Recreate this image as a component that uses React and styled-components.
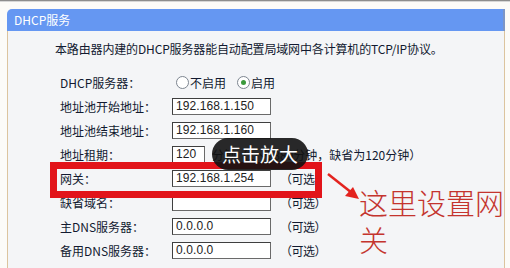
import React from "react";
import styled, { createGlobalStyle } from "styled-components";

const Global = createGlobalStyle`
  html, body { margin: 0; padding: 0; background: #fcfbf8; }
  body { font-family: "Noto Sans CJK SC", "Noto Sans", sans-serif; }
`;

const Page = styled.div`
  position: relative;
  width: 510px;
  height: 268px;
  overflow: hidden;
  background: #fcfbf8;
`;

const TopRule = styled.div`
  height: 1px;
  background: #8d8d8d;
  border-bottom: 1px solid #d6d6d6;
`;

const Panel = styled.section`
  margin: 7px 5px 0 7px;
`;

const Header = styled.div`
  height: 22px;
  background: #6597f2;
  border-radius: 5px 0 0 0;
  border-right: 2px solid #7c95c6;
  color: #fff;
  font-size: 12px;
  line-height: 22px;
  padding-left: 7px;
`;

const Body = styled.div`
  background: #f4f5f7;
  border-left: 1px solid #dcc49e;
  border-right: 1px solid #dcc49e;
  padding: 10px 0 20px 0;
  color: #121a30;
  font-size: 12px;
`;

const Desc = styled.p`
  margin: 0 0 13px 47px;
  line-height: 16px;
  white-space: nowrap;
  letter-spacing: -0.15px;
`;

const Rows = styled.div`
  margin-left: 52px;
  display: flex;
  flex-direction: column;
`;

const Row = styled.div`
  display: flex;
  align-items: center;
  height: 24px;
  white-space: nowrap;
`;

const Label = styled.div`
  width: 112px;
  flex: none;
`;

const Input = styled.div`
  box-sizing: border-box;
  width: ${(p) => p.$w || 99}px;
  height: 17px;
  border: 1px solid #3f3f3f;
  border-right-color: #6a6a6a;
  border-bottom-color: #6a6a6a;
  background: #fff;
  font-family: "Liberation Sans", sans-serif;
  font-size: 12px;
  line-height: 15px;
  padding-left: 3px;
  color: #222;
  letter-spacing: 0.1px;
`;

const Note = styled.span`
  margin-left: ${(p) => p.$gap || 9}px;
  letter-spacing: ${(p) => p.$ls || 0}px;
`;

const RadioGroup = styled.div`
  display: flex;
  align-items: center;
  padding-left: 4px;
`;

const Radio = styled.span`
  box-sizing: border-box;
  width: 13px;
  height: 13px;
  border-radius: 50%;
  border: 1px solid #7d8590;
  background: #fff;
  display: inline-flex;
  align-items: center;
  justify-content: center;
  margin: 0 1px 0 ${(p) => p.$ml || 0}px;
  &::after {
    content: "";
    width: 5px;
    height: 5px;
    border-radius: 50%;
    background: ${(p) => (p.$on ? "#3c9a3c" : "transparent")};
  }
`;

const RedBox = styled.div`
  position: absolute;
  left: 50px;
  top: 162px;
  width: 272px;
  height: 36px;
  box-sizing: border-box;
  border: 7px solid #e2141a;
`;

const Pill = styled.div`
  position: absolute;
  left: 212px;
  top: 138px;
  width: 96px;
  height: 32px;
  border-radius: 16px;
  background: rgba(18, 18, 18, 0.9);
  color: #fff;
  font-size: 19px;
  line-height: 32px;
  text-align: center;
`;

const Callout = styled.div`
  position: absolute;
  left: 359px;
  top: 184px;
  width: 150px;
  font-size: 29px;
  line-height: 37px;
  color: #c4342e;
  font-weight: 300;
`;

const Arrow = styled.svg`
  position: absolute;
  left: 324px;
  top: 170px;
`;

const rows = [
  { label: "地址池开始地址：", value: "192.168.1.150" },
  { label: "地址池结束地址：", value: "192.168.1.160" },
];
const optional = [
  { label: "网关：", value: "192.168.1.254" },
  { label: "缺省域名：", value: "" },
  { label: "主DNS服务器：", value: "0.0.0.0" },
  { label: "备用DNS服务器：", value: "0.0.0.0" },
];

export default function App() {
  return (
    <Page>
      <Global />
      <TopRule />
      <Panel>
        <Header>DHCP服务</Header>
        <Body>
          <Desc>本路由器内建的DHCP服务器能自动配置局域网中各计算机的TCP/IP协议。</Desc>
          <Rows>
            <Row>
              <Label>DHCP服务器：</Label>
              <RadioGroup>
                <Radio />
                不启用
                <Radio $on $ml={11} />
                启用
              </RadioGroup>
            </Row>
            {rows.map((r) => (
              <Row key={r.label}>
                <Label>{r.label}</Label>
                <Input>{r.value}</Input>
              </Row>
            ))}
            <Row>
              <Label>地址租期：</Label>
              <Input $w={33}>120</Input>
              <Note $gap={7}>分钟（1～2880分钟，缺省为120分钟）</Note>
            </Row>
            {optional.map((r) => (
              <Row key={r.label}>
                <Label>{r.label}</Label>
                <Input>{r.value}</Input>
                <Note $ls={-0.5}>（可选）</Note>
              </Row>
            ))}
          </Rows>
        </Body>
      </Panel>
      <RedBox />
      <Pill>点击放大</Pill>
      <Arrow width="40" height="32" viewBox="0 0 40 32">
        <line x1="4" y1="4" x2="28" y2="23" stroke="#e3231f" strokeWidth="2.5" />
        <polygon points="35,29 21,26 29,17" fill="#e3231f" />
      </Arrow>
      <Callout>这里设置网关</Callout>
    </Page>
  );
}
